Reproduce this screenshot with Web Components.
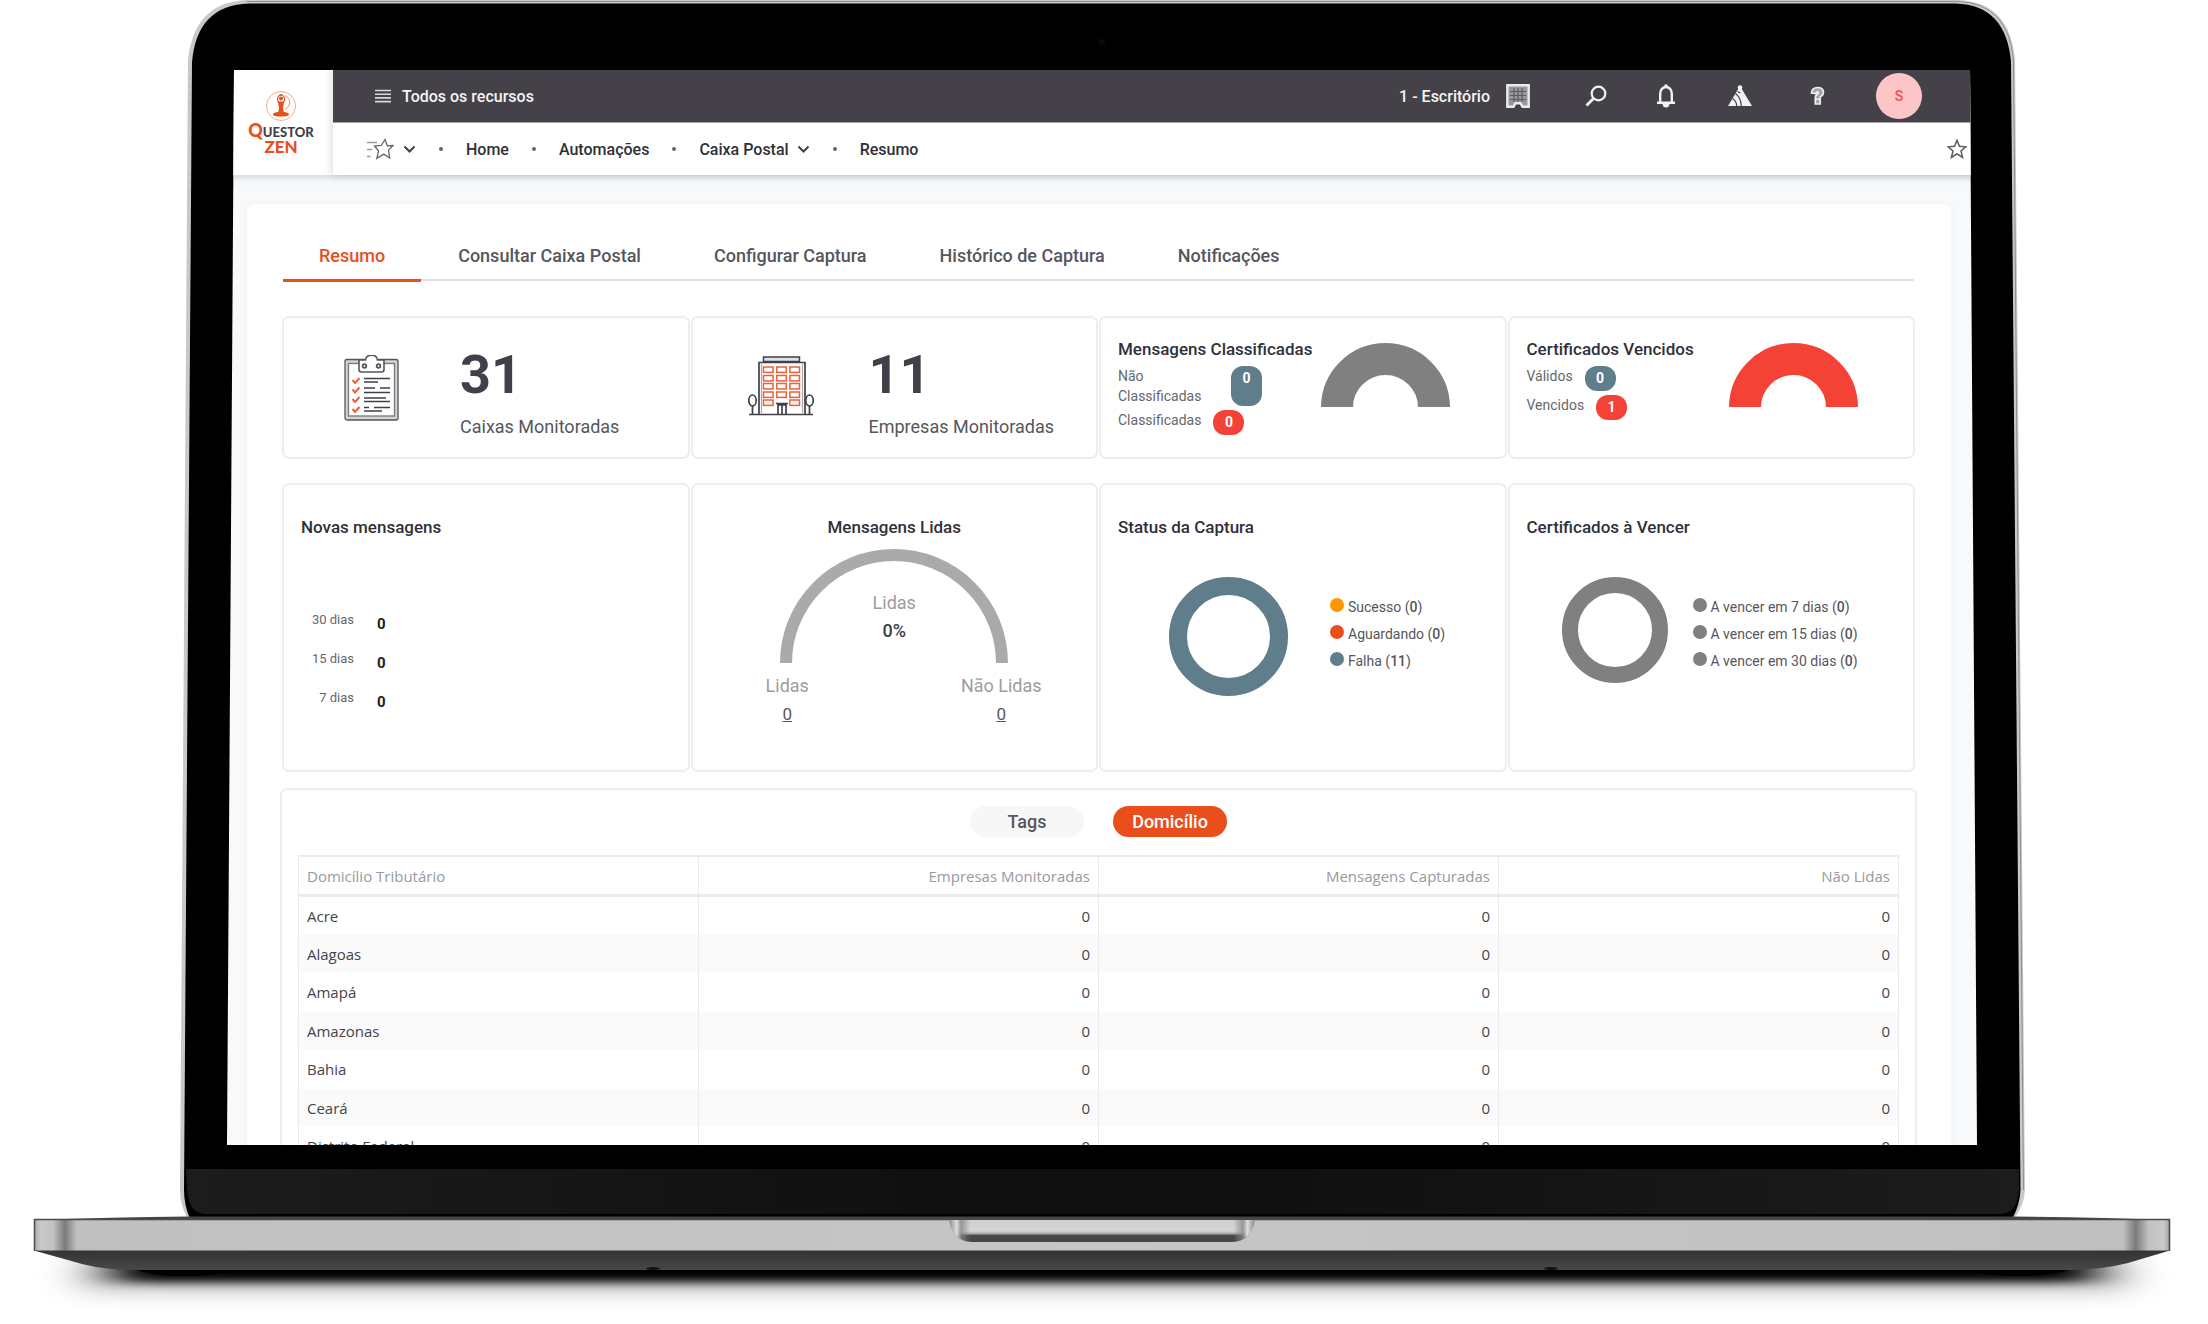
<!DOCTYPE html>
<html lang="pt-BR">
<head>
<meta charset="utf-8">
<title>Questor Zen - Caixa Postal</title>
<style>
  body { margin: 0; background: #fff; font-family: Roboto, "Liberation Sans", sans-serif; color: #3f4049; }
</style>
</head>
<body>
<laptop-frame>
  <app-header slot="header"></app-header>
  <resumo-page></resumo-page>
</laptop-frame>

<script>
const define = (name, html, setup) => {
  const tpl = document.createElement('template');
  tpl.innerHTML = html;
  customElements.define(name, class extends HTMLElement {
    constructor() {
      super();
      this.attachShadow({ mode: 'open' }).append(tpl.content.cloneNode(true));
    }
    connectedCallback() { if (setup) setup(this, this.shadowRoot); }
  });
};

/* ---------- icons ---------- */
const ICONS = {
  menu: [16, 14, '<path d="M0 1.5h16M0 5.2h16M0 8.9h16M0 12.6h16" stroke="#d8d8da" stroke-width="1.6"/>'],
  building: [24, 24, '<path d="M1.300 1.300h21.400v21.400H16.500l-2-3.500h-5l-2 3.500H1.300z" fill="#99989d" stroke="#ececed" stroke-width="2.400"/><path d="M4 7.500h16M4 11.500h16M4 15.500h16M8 4v14M12 4v14M16 4v14" stroke="#5b5a60" stroke-width="1.200"/>'],
  search: [22, 22, '<g fill="none" stroke="#f2f2f2" stroke-width="2.200"><circle cx="13.500" cy="8.500" r="6.800"/><path d="M8.500 13.500L1.500 20.500" stroke-width="2.800"/></g>'],
  bell: [20, 24, '<path d="M1 18.700h18M4.200 18V9.500a5.800 6.500 0 0 1 11.600 0V18" fill="none" stroke="#f2f2f2" stroke-width="2.400"/><path d="M10 0.500v3" stroke="#f2f2f2" stroke-width="3"/><path d="M6.500 19.500h7a3.500 4 0 0 1-7 0z" fill="#f2f2f2"/>'],
  peaks: [24, 22, '<circle cx="12" cy="2.500" r="2.300" fill="#f2f2f2"/><path d="M12 1L24 21H0z" fill="#f2f2f2"/><path d="M7.500 8.500C11 11 13 15.500 13.300 21M4.500 13.500c2.500 1.500 4 4 4.300 7.500M9.500 6.500l3 1.500" fill="none" stroke="#444248" stroke-width="1.200"/>'],
  help: [15, 20, '<path d="M1.500 7C1.500 3.200 4 1.500 7.500 1.500s6 1.900 6 5c0 3.400-3 3.300-3.300 5v6.500H5.300v-6.500c0-3 3-3.200 3-4.700 0-1.600-2-1.400-2.300.7z" fill="#a5a4a8" stroke="#ededee" stroke-width="1.700"/><path d="M5 13.300h5.500" stroke="#ededee" stroke-width="1.500"/>'],
  favlist: [28, 22, '<path d="M1 4.500h10M1 11.500h5M1 18.500h3.500" stroke="#9a9a9e" stroke-width="1.700"/><path d="M19 1.500l2.300 6.300 5.700-.3-4.500 4.600 1.200 7.900-5.900-3.900-7 4.300 1.800-7.400L8.500 8l6.800-.5z" fill="#fff" stroke="#66666c" stroke-width="1.300"/>'],
  chevron: [13, 9, '<path d="M1.500 1.500l5 5 5-5" fill="none" stroke="#3f4049" stroke-width="2"/>'],
  star: [20, 20, '<path d="M10 1.200l2.500 6.100 6.300.5-4.800 4.200 1.600 6.500-5.600-3.600-5.600 3.600L6 12 1.200 7.800l6.300-.5z" fill="none" stroke="#5c5c62" stroke-width="1.500"/>'],
  clipboard: [56, 66, `<g fill="none" stroke="#55565c" stroke-width="1.300">
    <rect x="1" y="4.500" width="53" height="60.500" rx="2" fill="#d2d3d5"/><rect x="4.500" y="8.500" width="46" height="52.500" fill="#fff" stroke="#77777c"/>
    <path d="M15 5h6.500C22.500-1.500 32.500-1.500 33.500 5H40v9.500c0 1.500-1 2.500-2.500 2.500h-20c-1.500 0-2.500-1-2.500-2.500z" fill="#fff" stroke-width="1.600"/><circle cx="20.500" cy="11" r="1.800" stroke-width="1.800"/><circle cx="34.500" cy="11" r="1.800" stroke-width="1.800"/></g>
    <g stroke="#3f4049" stroke-width="1.700"><path d="M20 23.500h26M20 27h14M20 33h11M36 33h10M20 37.500h26M20 43h22M20 46.500h26M20 52.500h5M30 52.500h16M20 56h18"/></g>
    <g fill="none" stroke="#ee5f38" stroke-width="2"><path d="M8.500 25l2.500 3 4.500-5M8.500 34.500l2.500 3 4.500-5M8.500 44l2.500 3 4.500-5M8.500 54l2.500 3 4.500-5"/></g>`],
  office: [66, 64, `<g fill="none" stroke="#3f4049" stroke-width="1.700"><rect x="15.500" y="1" width="36" height="4.500" fill="#dfe3e2" stroke-width="1.500"/><path d="M11 58V6.500h46V58M1 58.500h64" /><path d="M13.500 8v49M54.500 8v49" stroke="#aaa" stroke-width="1.200"/><path d="M28 47.500h12M29.500 49h9M30 58V48M34 58V48M38 58V48"/>
    <path d="M4.500 58V50M61.500 58V50"/><ellipse cx="4.500" cy="44.500" rx="3.700" ry="5.500"/><ellipse cx="61.500" cy="44.500" rx="3.700" ry="5.500"/></g>
    <g fill="#fff" stroke="#ee5f38" stroke-width="1.500">${[11,19.500,27.500,36,44].map((y, r) => [15.500,28.700,41.900].map((x, c) => r === 4 && c === 1 ? '' : `<rect x="${x}" y="${y}" width="9.600" height="5.400"/>`).join('')).join('')}</g>`],
  zen: [32, 32, `<g fill="none" stroke="#f3a184"><circle cx="16" cy="16" r="14.500" stroke-width=".9"/></g><path d="M20 5.500c6 3 6.500 10 0 14" fill="none" stroke="#f08c68" stroke-width="1"/>
    <g fill="#e94e1b"><circle cx="16" cy="8.600" r="2"/><path d="M16 3l1 3h-2z"/><path d="M12.800 11.500h6.400L18 17.500l.7 4.500c3 .3 5.300 1 5.300 2.500s-3 2-8 2-8-.5-8-2 2.300-2.200 5.300-2.500l.7-4.500z"/></g><path d="M15.500 4.500C12 7 11.500 9 13.500 12.500M16.500 4.500c3.500 2.500 4 4.500 2 8" fill="none" stroke="#e94e1b" stroke-width="1.300"/>`]
};
define('app-icon', `<style>:host{display:inline-flex;flex:none} svg{display:block}</style>`, (el, root) => {
  if (root.querySelector('svg')) return;
  const [w, h, body] = ICONS[el.getAttribute('name')];
  root.innerHTML += `<svg width="${w}" height="${h}" viewBox="0 0 ${w} ${h}" aria-hidden="true">${body}</svg>`;
});

/* ---------- device ---------- */
define('laptop-frame', `
<style>
  :host { display: flex; flex-direction: column; position: relative; box-sizing: border-box; height: 100vh; padding: 70px 231px 179px 227px; overflow: hidden; }
  .device { position: absolute; inset: 0; width: 100%; height: 100%; }
  .screen { position: relative; flex: 1; min-height: 0; overflow: hidden; background: #f8f9fb; clip-path: polygon(7px 0, calc(100% - 7px) 0, 100% 100%, 0 100%); }
</style>
<svg class="device" viewBox="0 0 2208 1324" preserveAspectRatio="none" aria-hidden="true">
  <defs>
    <linearGradient id="metal" x1="34" x2="2170" y1="0" y2="0" gradientUnits="userSpaceOnUse">
      <stop offset="0" stop-color="#a8a8a8"/><stop offset=".003" stop-color="#c9c9c9"/><stop offset=".009" stop-color="#c2c2c2"/><stop offset=".0145" stop-color="#7b7b7b"/><stop offset=".020" stop-color="#c0c0c0"/>
      <stop offset=".5" stop-color="#c6c6c6"/><stop offset=".978" stop-color="#c0c0c0"/><stop offset=".984" stop-color="#7b7b7b"/><stop offset=".990" stop-color="#c2c2c2"/><stop offset=".997" stop-color="#c9c9c9"/><stop offset="1" stop-color="#a0a0a0"/>
    </linearGradient>
    <linearGradient id="chin" x1="0" x2="1"><stop offset="0" stop-color="#1c1c1c"/><stop offset=".4" stop-color="#101010"/><stop offset=".6" stop-color="#101010"/><stop offset="1" stop-color="#1c1c1c"/></linearGradient>
    <linearGradient id="under" x1="0" x2="0" y1="0" y2="1"><stop offset="0" stop-color="#333"/><stop offset="1" stop-color="#484848"/></linearGradient>
    <linearGradient id="notch" x1="0" x2="0" y1="0" y2="1"><stop offset="0" stop-color="#cfcfcf"/><stop offset=".5" stop-color="#d6d6d6"/><stop offset=".62" stop-color="#aaa"/><stop offset=".7" stop-color="#4a4a4a"/><stop offset="1" stop-color="#444"/></linearGradient>
    <linearGradient id="notchSide" x1="0" x2="1" y1="0" y2="0"><stop offset="0" stop-color="#888"/><stop offset=".025" stop-color="#ddd"/><stop offset=".04" stop-color="#888" stop-opacity=".8"/><stop offset=".07" stop-color="#888" stop-opacity="0"/><stop offset=".93" stop-color="#888" stop-opacity="0"/><stop offset=".96" stop-color="#888" stop-opacity=".8"/><stop offset=".975" stop-color="#ddd"/><stop offset="1" stop-color="#888"/></linearGradient>
    <filter id="soft" x="-5%" y="-100%" width="110%" height="300%"><feGaussianBlur stdDeviation="22 5"/></filter>
    <filter id="wide" x="-5%" y="-100%" width="110%" height="300%"><feGaussianBlur stdDeviation="22 12"/></filter>
  </defs>
  <rect x="80" y="1262" width="2048" height="24" fill="#000" opacity=".4" filter="url(#wide)"/>
  <rect x="118" y="1256" width="1972" height="26" fill="#000" filter="url(#soft)"/>
  <path d="M247 0H1958Q2010 2 2015 60L2025 1190Q2024 1206 2014 1219H188Q180 1206 180 1190L188 60Q194 2 247 0Z" fill="#c8c8c8"/>
  <path d="M247 1.500H1958Q2008 3 2013.500 60L2023.500 1190" fill="none" stroke="#8f8f8f" stroke-width="1"/>
  <path d="M249 3.500H1956Q2006 5 2011 62L2020.500 1190Q2020 1205 2012 1219H190Q184 1205 184 1190L192 62Q197 5 249 3.500Z" fill="#000"/>
  <path d="M186 1169H2019V1188Q2018 1214 2000 1214H206Q188 1214 187 1188Z" fill="url(#chin)"/>
  <circle cx="1102" cy="42" r="3" fill="#0b0c10"/>
  <path d="M34 1220Q110 1217 190 1216.500H2014Q2100 1217 2170 1220Z" fill="#444"/>
  <path d="M34 1219.500H2170V1251H34Z" fill="url(#metal)"/>
  <path d="M34.500 1251V1219.500H2169.500V1251" fill="none" stroke="#4a4a4a" stroke-width="1.500"/>
  <path d="M34 1250.500H2170L2128 1263Q2100 1270 2070 1270H137Q105 1270 82 1264Z" fill="url(#under)"/>
  <path d="M137 1270H235Q215 1276 186 1276Q155 1276 137 1270ZM1968 1270H2068Q2050 1276 2018 1276Q1990 1276 1968 1270Z" fill="#000"/>
  <ellipse cx="653" cy="1268.500" rx="7" ry="1.500" fill="#111"/><ellipse cx="1551" cy="1268.500" rx="7" ry="1.500" fill="#111"/>
  <path d="M949 1220H1255Q1252 1241 1232 1242H972Q952 1241 949 1220Z" fill="url(#notch)"/>
  <path d="M949 1220H1255Q1252 1241 1232 1242H972Q952 1241 949 1220Z" fill="url(#notchSide)"/>
</svg>
<div class="screen"><slot name="header"></slot><slot></slot></div>`);

/* ---------- header ---------- */
define('brand-logo', `
<style>
  :host { display: flex; flex-direction: column; align-items: center; font: 900 13px/16px Lato, sans-serif; color: #3f4049; }
  .name { display: flex; align-items: baseline; }
  b { font-size: 18px; font-weight: 900; color: #e94e1b; }
  strong { font-size: 17px; line-height: 14px; font-weight: 900; color: #e94e1b; }
</style>
<app-icon name="zen"></app-icon><div class="name"><b>Q</b><span>UESTOR</span></div><strong>ZEN</strong>`);

define('app-header', `
<style>
  :host { display: flex; position: relative; height: 105px; color: #2f2f36; font-size: 16px; font-weight: 500; box-shadow: 0 2px 8px rgba(0,0,0,.16); background: #fff; }
  a { color: inherit; text-decoration: none; display: inline-flex; align-items: center; gap: 8px; white-space: nowrap; }
  button { font: inherit; color: inherit; background: none; border: 0; padding: 0; display: inline-flex; align-items: center; gap: 11px; white-space: nowrap; }
  brand-logo { box-sizing: border-box; width: 106px; padding: 20px 0 0 2px; }
  .bars { flex: 1; min-width: 0; box-shadow: -2px 0 8px rgba(0,0,0,.12); }
  .top { display: flex; align-items: center; height: 52px; box-sizing: border-box; background: #444248; color: #f4f4f4; padding: 0 55px 0 42px; justify-content: space-between; }
  .tools { display: flex; align-items: center; }
  .tools button { justify-content: center; }
  .office { gap: 16px; }
  .search { width: 22px; margin-left: 55px; }
  .bell { width: 20px; margin-left: 49px; }
  .peaks { width: 24px; margin-left: 52px; }
  .help { width: 16px; margin-left: 57px; }
  .avatar { width: 46px; height: 46px; margin-left: 51px; border-radius: 50%; background: #fcc6c8; color: #ee4f4f; font-size: 14px; }
  .nav { display: flex; align-items: center; height: 52px; padding: 0 10px 0 33px; border-top: 1px solid #a5a4a8; }
  .nav a, .nav button { flex: none; }
  .dot { width: 4px; height: 4px; border-radius: 50%; background: #66666c; margin: 0 23px; }
  .menu { gap: 9px; }
  .fav { margin-left: auto; }
</style>
<brand-logo></brand-logo>
<div class="bars">
  <div class="top">
    <button><app-icon name="menu"></app-icon>Todos os recursos</button>
    <div class="tools">
      <button class="office">1 - Escritório<app-icon name="building"></app-icon></button>
      <button class="search" aria-label="Buscar"><app-icon name="search"></app-icon></button>
      <button class="bell" aria-label="Alertas"><app-icon name="bell"></app-icon></button>
      <button class="peaks" aria-label="Novidades"><app-icon name="peaks"></app-icon></button>
      <button class="help" aria-label="Ajuda"><app-icon name="help"></app-icon></button>
      <button class="avatar">S</button>
    </div>
  </div>
  <nav class="nav">
    <button class="menu" aria-label="Favoritos"><app-icon name="favlist"></app-icon><app-icon name="chevron"></app-icon></button>
    <i class="dot"></i><a href="#home">Home</a>
    <i class="dot"></i><a href="#automacoes">Automações</a>
    <i class="dot"></i><a href="#caixa">Caixa Postal<app-icon name="chevron"></app-icon></a>
    <i class="dot"></i><a href="#resumo">Resumo</a>
    <button class="fav" aria-label="Favoritar"><app-icon name="star"></app-icon></button>
  </nav>
</div>`);

define('tab-bar', `
<style>
  :host { display: flex; gap: 1px; border-bottom: 2px solid #e0e0e0; }
  ::slotted(a) { padding: 40px 36px 11px; margin-bottom: -3px; border-bottom: 3px solid transparent; font-size: 18px; line-height: 24px; font-weight: 500; color: #55565c; text-decoration: none; white-space: nowrap; }
  ::slotted(a[aria-current]) { color: #e94e1b; border-color: #e94e1b; }
</style><slot></slot>`);

/* ---------- cards ---------- */
define('ui-card', `
<style>
  :host { display: block; box-sizing: border-box; border: 2px solid #eee; border-radius: 7px; background: #fff; padding: 30px 17px 0; }
  h2 { margin: 0; font-size: 17px; line-height: 24px; font-weight: 500; color: #303138; white-space: nowrap; }
  :host([centered]) h2 { text-align: center; }
</style><h2></h2><slot></slot>`, (el, root) => { root.querySelector('h2').textContent = el.getAttribute('heading'); });

define('stat-card', `
<style>
  :host { display: grid; grid-template-columns: 176px 1fr; align-items: center; box-sizing: border-box; border: 2px solid #eee; border-radius: 7px; }
  .icon { display: grid; justify-content: center; }
  strong { display: block; font-size: 54px; line-height: 60px; font-weight: 700; margin-bottom: 10px; }
  span { display: block; font-size: 18px; line-height: 24px; color: #55565c; white-space: nowrap; }
  .text { padding-top: 8px; }
</style><div class="icon"></div><div class="text"><strong></strong><span><slot></slot></span></div>`, (el, root) => {
  root.querySelector('.icon').innerHTML = `<app-icon name="${el.getAttribute('icon')}"></app-icon>`;
  root.querySelector('strong').textContent = el.getAttribute('value');
});

define('half-card', `
<style>
  :host { display: flex; justify-content: space-between; box-sizing: border-box; border: 2px solid #eee; border-radius: 7px; padding: 19px 55px 0 17px; }
  h2 { margin: 0 0 5px; width: 0; font-size: 17px; line-height: 24px; font-weight: 500; color: #303138; white-space: nowrap; }
  .rows { display: flex; flex-direction: column; gap: 4px; }
  .chart { margin-top: 6px; }
</style><div><h2></h2><div class="rows"><slot></slot></div></div><div class="chart"></div>`, (el, root) => {
  root.querySelector('h2').textContent = el.getAttribute('heading');
  root.querySelector('.chart').innerHTML = `<donut-chart half size="129" ring="32" color="${el.getAttribute('color')}"></donut-chart>`;
});

define('count-row', `
<style>
  :host { display: flex; gap: 12px; font-size: 14px; line-height: 20px; color: #66676d; }
  :host([wrap]) span { width: 101px; }
  b { box-sizing: border-box; width: 31px; min-height: 25px; padding-top: 3px; border-radius: 12px; background: var(--tone); color: #fff; text-align: center; font-weight: 700; line-height: 18px; }
</style><span><slot></slot></span><b></b>`, (el, root) => {
  root.querySelector('b').textContent = el.getAttribute('count');
  el.style.setProperty('--tone', el.getAttribute('tone'));
});

define('donut-chart', `<style>:host{display:block;flex:none} svg{display:block}</style><div></div>`, (el, root) => {
  const size = +el.getAttribute('size'), ring = +el.getAttribute('ring'), half = el.hasAttribute('half');
  const c = size / 2, r = c - ring / 2, h = half ? Math.floor(c) : size;
  const shape = half ? `<path d="M${ring / 2} ${c}A${r} ${r} 0 0 1 ${size - ring / 2} ${c}"` : `<circle cx="${c}" cy="${c}" r="${r}"`;
  root.querySelector('div').innerHTML = `<svg width="${size}" height="${h}" viewBox="0 0 ${size} ${h}">${shape} fill="none" stroke="${el.getAttribute('color')}" stroke-width="${ring}"/></svg>`;
});

define('legend-item', `
<style>
  :host { display: flex; gap: 4px; font-size: 14px; line-height: 26px; color: #55565c; white-space: nowrap; }
  i { width: 14px; height: 14px; margin-top: 4px; border-radius: 50%; background: var(--tone); }
  b { font-weight: 500; }
</style><i></i><span><slot></slot> (<b></b>)</span>`, (el, root) => {
  root.querySelector('b').textContent = el.getAttribute('count');
  el.style.setProperty('--tone', el.getAttribute('tone'));
});

define('day-list', `
<style>
  :host { display: grid; gap: 13px; margin-top: 71px; }
  div { display: grid; grid-template-columns: 53px auto; gap: 23px; height: 26px; justify-content: start; }
  span { font-size: 13px; line-height: 20px; text-align: right; color: #66676d; }
  b { font-size: 15px; line-height: 28px; font-weight: 700; color: #222; }
</style>
<div><span>30 dias</span><b>0</b></div><div><span>15 dias</span><b>0</b></div><div><span>7 dias</span><b>0</b></div>`);

define('read-gauge', `
<style>
  :host { display: block; font-size: 18px; line-height: 28px; text-align: center; color: #9d9d9d; }
  .dial { display: grid; justify-content: center; margin-top: 10px; }
  .dial > * { grid-area: 1 / 1; }
  .mid { align-self: end; padding-bottom: 18px; }
  .mid b { display: block; font-weight: 500; color: #3f4049; }
  .ends { display: flex; justify-content: center; gap: 107px; margin-top: 9px; }
  .ends div { width: 107px; }
  a { display: block; color: #55565c; font-size: 17px; }
</style>
<div class="dial"><donut-chart half size="228" ring="12" color="#aaaaaa"></donut-chart><div class="mid">Lidas<b>0%</b></div></div>
<div class="ends"><div>Lidas<a href="#lidas">0</a></div><div>Não Lidas<a href="#nao-lidas">0</a></div></div>`);

/* ---------- table ---------- */
define('domicile-table', `
<style>
  :host { display: block; }
  table { width: 100%; border-collapse: collapse; table-layout: fixed; font: 15px/20px "Open Sans", "Noto Sans", sans-serif; color: #44454b; }
  th, td { box-sizing: border-box; padding: 0 8px; border: 1px solid #e9ebec; text-align: right; font-weight: 400; height: 40px; }
  th:first-child, td:first-child { text-align: left; }
  thead th { color: #979aa0; height: 39px; padding-top: 2px; border-top-width: 2px; border-bottom: 3px solid #e9ebec; }
  tbody td { border-top: 0; border-bottom: 0; }
  tbody tr:nth-child(even) td { background: #fafafa; height: 37px; }
</style>
<table>
  <thead><tr><th scope="col">Domicílio Tributário</th><th scope="col">Empresas Monitoradas</th><th scope="col">Mensagens Capturadas</th><th scope="col">Não Lidas</th></tr></thead>
  <tbody></tbody>
</table>`, (el, root) => {
  root.querySelector('tbody').innerHTML = ['Acre', 'Alagoas', 'Amapá', 'Amazonas', 'Bahia', 'Ceará', 'Distrito Federal']
    .map(n => `<tr><td>${n}</td><td>0</td><td>0</td><td>0</td></tr>`).join('');
});

/* ---------- page ---------- */
define('resumo-page', `
<style>
  :host { display: block; padding: 29px 26px 0 20px; }
  main { background: #fff; border-radius: 8px; padding: 0 37px 40px 36px; box-shadow: 0 0 6px rgba(0,0,0,.04); }
  .row { display: grid; grid-template-columns: repeat(4, minmax(0, 1fr)); gap: 1px; margin: 0 -1px; }
  .stats { padding-top: 35px; }
  .stats > * { min-height: 143px; }
  .charts { padding-top: 24px; }
  .charts > * { min-height: 289px; }
  .chart { display: flex; margin-top: 38px; align-items: flex-start; }
  .status { gap: 42px; padding-left: 51px; }
  .expiry { gap: 25px; padding-left: 35px; }
  .legend { display: grid; gap: 1px; margin-top: 17px; }
  .panel { margin: 16px -3px 0; border: 2px solid #eee; border-radius: 7px; padding: 16px 16px; }
  .switch { display: flex; justify-content: center; gap: 29px; margin-bottom: 18px; }
  .switch button { width: 114px; height: 31px; padding: 0; border: 0; border-radius: 16px; background: #f7f7f7; color: #55565c; font: 500 18px/24px Roboto, sans-serif; }
  .switch button[aria-pressed="true"] { background: #e94e1b; color: #fff; }
</style>
<main>
  <tab-bar>
    <a href="#resumo" aria-current="page">Resumo</a><a href="#consultar">Consultar Caixa Postal</a><a href="#configurar">Configurar Captura</a><a href="#historico">Histórico de Captura</a><a href="#notificacoes">Notificações</a>
  </tab-bar>
  <section class="row stats">
    <stat-card icon="clipboard" value="31">Caixas Monitoradas</stat-card>
    <stat-card icon="office" value="11">Empresas Monitoradas</stat-card>
    <half-card heading="Mensagens Classificadas" color="#808080">
      <count-row wrap count="0" tone="#607d8b">Não Classificadas</count-row>
      <count-row count="0" tone="#f44336">Classificadas</count-row>
    </half-card>
    <half-card heading="Certificados Vencidos" color="#f44336">
      <count-row count="0" tone="#607d8b">Válidos</count-row>
      <count-row count="1" tone="#f44336">Vencidos</count-row>
    </half-card>
  </section>
  <section class="row charts">
    <ui-card heading="Novas mensagens"><day-list></day-list></ui-card>
    <ui-card heading="Mensagens Lidas" centered><read-gauge></read-gauge></ui-card>
    <ui-card heading="Status da Captura">
      <div class="chart status"><donut-chart size="119" ring="18" color="#607d8b"></donut-chart>
        <div class="legend"><legend-item tone="#ff9800" count="0">Sucesso</legend-item><legend-item tone="#e94e1b" count="0">Aguardando</legend-item><legend-item tone="#607d8b" count="11">Falha</legend-item></div></div>
    </ui-card>
    <ui-card heading="Certificados à Vencer">
      <div class="chart expiry"><donut-chart size="106" ring="16" color="#808080"></donut-chart>
        <div class="legend"><legend-item tone="#808080" count="0">A vencer em 7 dias</legend-item><legend-item tone="#808080" count="0">A vencer em 15 dias</legend-item><legend-item tone="#808080" count="0">A vencer em 30 dias</legend-item></div></div>
    </ui-card>
  </section>
  <section class="panel">
    <div class="switch"><button aria-pressed="false">Tags</button><button aria-pressed="true">Domicílio</button></div>
    <domicile-table></domicile-table>
  </section>
</main>`);
</script>
</body>
</html>
